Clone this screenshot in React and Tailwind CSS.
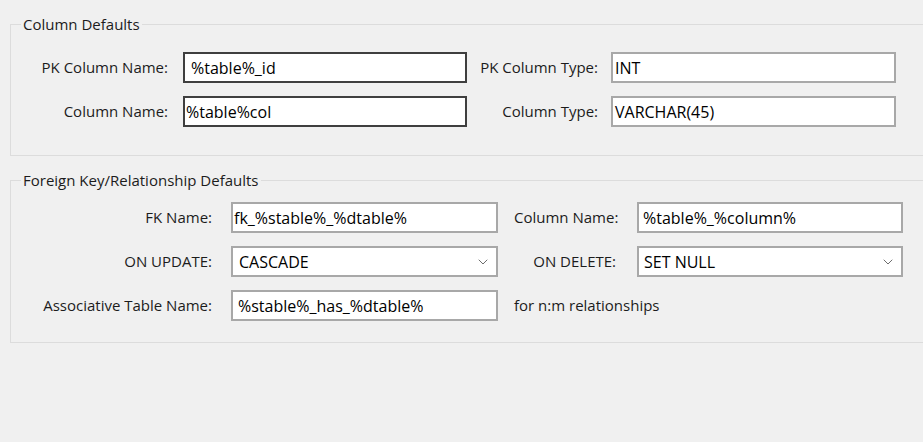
import { ChevronDown } from 'lucide-react';

const font = { fontFamily: '"Open Sans", "Noto Sans", Arial, sans-serif' };

function Field({ value, dark, pad = 'pl-[3px]', width, select }) {
  return (
    <div
      className={`h-[31px] ${width} bg-white border-2 ${dark ? 'border-[#3f3f3f]' : 'border-[#a8a8a8]'} flex items-center ${pad} pr-[5px] text-[16px] text-black`}
    >
      <span className="flex-1 whitespace-nowrap">{value}</span>
      {select && <ChevronDown className="w-[16px] h-[16px] text-[#6d6d6d]" strokeWidth={1.5} />}
    </div>
  );
}

function Label({ children, width, left }) {
  return (
    <div className={`${width} ${left ? 'text-left' : 'text-right'} text-[15px] text-[#1c1c1c] whitespace-nowrap`}>
      {children}
    </div>
  );
}

export default function App() {
  return (
    <div className="w-[923px] h-[442px] bg-[#f0f0f0] overflow-hidden pt-[14px] pl-[10px]" style={font}>
      {/* Column defaults */}
      <fieldset className="w-[940px] border border-[#dcdcdc] pb-[28px]">
        <legend className="ml-[10px] px-[2px] text-[15px] leading-[20px] text-[#1c1c1c]">Column Defaults</legend>
        <div className="pt-[18px] flex flex-col gap-[13px]">
          <div className="flex items-center">
            <Label width="w-[157px]">PK Column Name:</Label>
            <div className="w-[15px]" />
            <Field value="%table%_id" dark pad="pl-[6px]" width="w-[284px]" />
            <div className="w-[9px]" />
            <Label width="w-[122px]">PK Column Type:</Label>
            <div className="w-[13px]" />
            <Field value="INT" pad="pl-[2px]" width="w-[285px]" />
          </div>
          <div className="flex items-center">
            <Label width="w-[157px]">Column Name:</Label>
            <div className="w-[15px]" />
            <Field value="%table%col" dark pad="pl-[1px]" width="w-[284px]" />
            <div className="w-[9px]" />
            <Label width="w-[122px]">Column Type:</Label>
            <div className="w-[13px]" />
            <Field value="VARCHAR(45)" pad="pl-[2px]" width="w-[285px]" />
          </div>
        </div>
      </fieldset>

      {/* Foreign key defaults */}
      <fieldset className="mt-[14px] w-[940px] border border-[#dcdcdc] pb-[21px]">
        <legend className="ml-[10px] px-[2px] text-[15px] leading-[20px] text-[#1c1c1c]">
          Foreign Key/Relationship Defaults
        </legend>
        <div className="pt-[12px] flex flex-col gap-[13px]">
          <div className="flex items-center">
            <Label width="w-[201px]">FK Name:</Label>
            <div className="w-[19px]" />
            <Field value="fk_%stable%_%dtable%" pad="pl-[1px]" width="w-[267px]" />
            <div className="w-[16px]" />
            <Label width="w-[102px]">Column Name:</Label>
            <div className="w-[21px]" />
            <Field value="%table%_%column%" pad="pl-[4px]" width="w-[266px]" />
          </div>
          <div className="flex items-center">
            <Label width="w-[201px]">ON UPDATE:</Label>
            <div className="w-[19px]" />
            <Field value="CASCADE" pad="pl-[6px]" width="w-[267px]" select />
            <div className="w-[16px]" />
            <Label width="w-[102px]">ON DELETE:</Label>
            <div className="w-[21px]" />
            <Field value="SET NULL" pad="pl-[5px]" width="w-[266px]" select />
          </div>
          <div className="flex items-center">
            <Label width="w-[201px]">Associative Table Name:</Label>
            <div className="w-[19px]" />
            <Field value="%stable%_has_%dtable%" pad="pl-[5px]" width="w-[267px]" />
            <div className="w-[16px]" />
            <Label width="w-[200px]" left>for n:m relationships</Label>
          </div>
        </div>
      </fieldset>
    </div>
  );
}
